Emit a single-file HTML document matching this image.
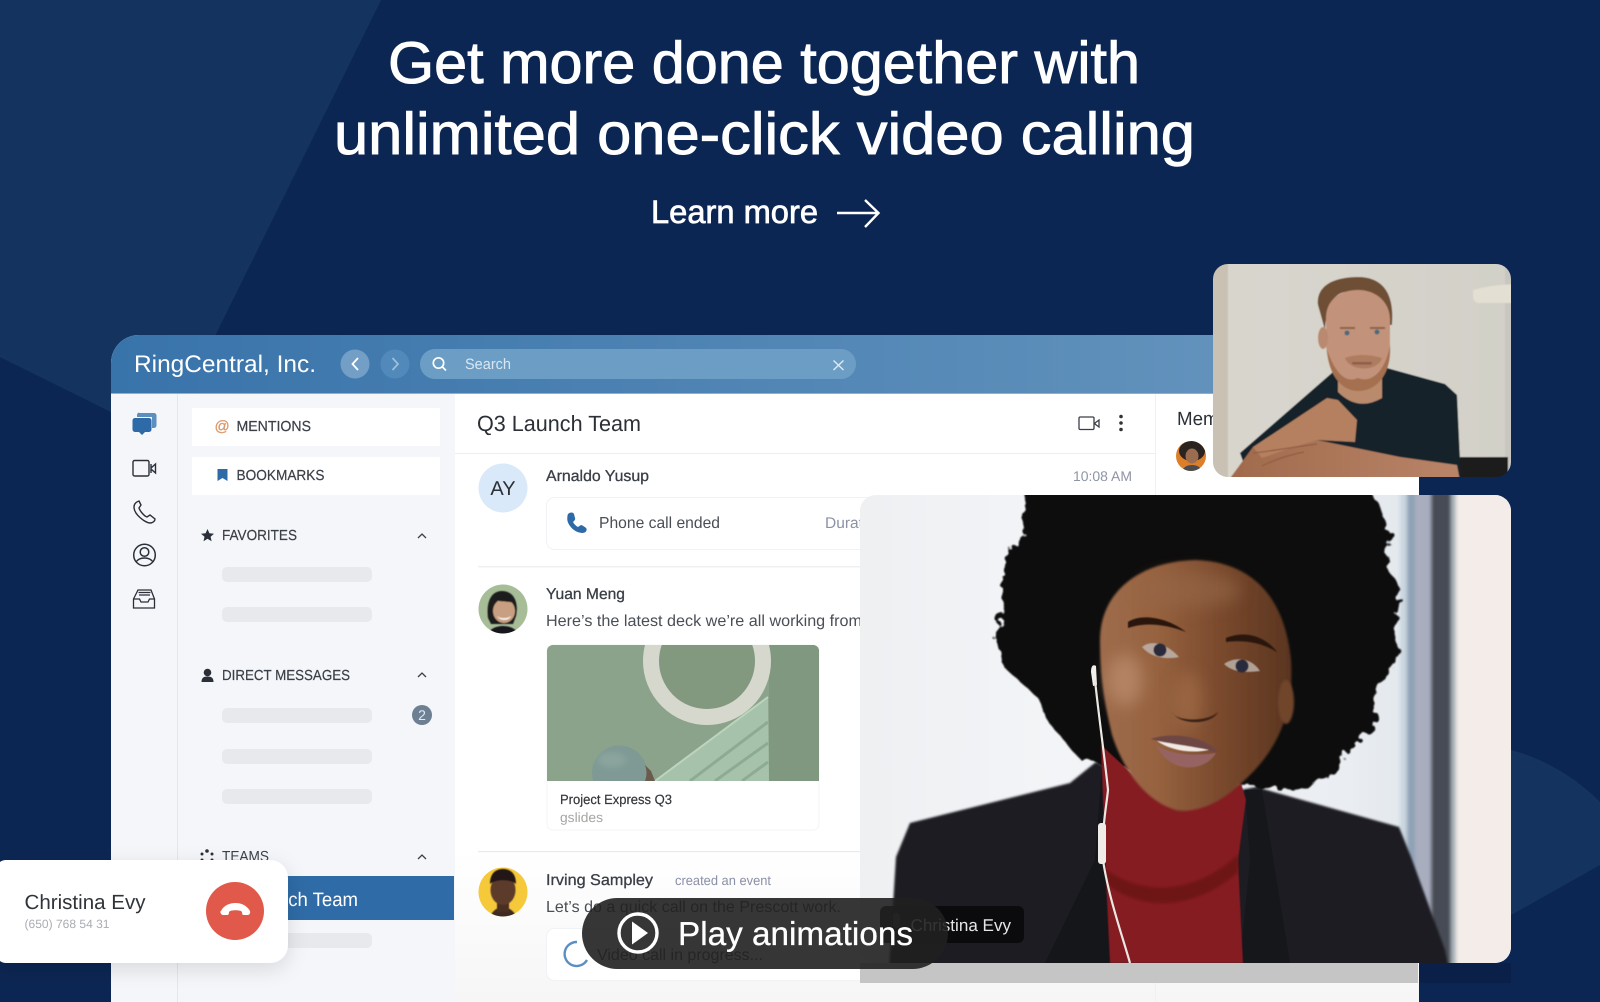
<!DOCTYPE html>
<html lang="en"><head><meta charset="utf-8"><title>RingCentral</title>
<style>
html,body{margin:0;padding:0;background:#0c2653;width:1600px;height:1002px;overflow:hidden}
svg{display:block}
text{font-family:"Liberation Sans",sans-serif}
.m{stroke-width:.3px;paint-order:stroke}
</style></head><body>
<svg width="1600" height="1002" viewBox="0 0 1600 1002" xmlns="http://www.w3.org/2000/svg" text-rendering="geometricPrecision">
<defs>
<linearGradient id="hd" x1="0" x2="1" y1="0" y2="0"><stop offset="0" stop-color="#3873aa"/><stop offset="1" stop-color="#6292bc"/></linearGradient>
<linearGradient id="bot" x1="0" x2="0" y1="0" y2="1"><stop offset="0" stop-color="#fff"/><stop offset="1" stop-color="#f6f6f6"/></linearGradient>
<linearGradient id="wall" x1="0" x2="1" y1="0" y2="0"><stop offset="0" stop-color="#d9d6ce"/><stop offset="1" stop-color="#d2d0c8"/></linearGradient>
<linearGradient id="wbg" x1="0" x2="1" y1="0" y2="0"><stop offset="0" stop-color="#eef0f2"/><stop offset=".3" stop-color="#f3f4f7"/><stop offset=".75" stop-color="#eaedf1"/><stop offset="1" stop-color="#d5dfe6"/></linearGradient>
<linearGradient id="skin" x1="0" x2="1" y1="0" y2="0"><stop offset="0" stop-color="#9e6c4c"/><stop offset=".3" stop-color="#96623f"/><stop offset=".65" stop-color="#78482c"/><stop offset="1" stop-color="#5a3520"/></linearGradient>
<linearGradient id="arm" x1="0" x2="1" y1="0" y2="0"><stop offset="0" stop-color="#a06a4c"/><stop offset="1" stop-color="#b98468"/></linearGradient>
<filter id="b05" x="-20%" y="-20%" width="140%" height="140%"><feGaussianBlur stdDeviation=".6"/></filter>
<filter id="b1" x="-20%" y="-20%" width="140%" height="140%"><feGaussianBlur stdDeviation="1"/></filter>
<filter id="b2" x="-5%" y="-5%" width="110%" height="110%"><feGaussianBlur stdDeviation="1.800"/></filter>
<filter id="b3" x="-30%" y="-30%" width="160%" height="160%"><feGaussianBlur stdDeviation="3"/></filter>
<filter id="b8" x="-50%" y="-50%" width="200%" height="200%"><feGaussianBlur stdDeviation="8"/></filter>
<filter id="hair" x="-10%" y="-10%" width="120%" height="120%"><feTurbulence type="fractalNoise" baseFrequency=".09" numOctaves="2" seed="4"/><feDisplacementMap in="SourceGraphic" scale="16"/><feGaussianBlur stdDeviation=".8"/></filter>
<filter id="sh" x="-20%" y="-30%" width="140%" height="170%"><feDropShadow dx="0" dy="6" stdDeviation="10" flood-color="#000" flood-opacity=".12"/></filter>
<clipPath id="cA"><path d="M111 1002V363a28 28 0 0 1 28-28H1419V1002z"/></clipPath>
<clipPath id="cP"><rect x="1213" y="264" width="298" height="213" rx="15"/></clipPath>
<clipPath id="cW"><rect x="860" y="495" width="651" height="468" rx="16"/></clipPath>
<clipPath id="cD"><path d="M547 781V651a6 6 0 0 1 6-6H813a6 6 0 0 1 6 6V781z"/></clipPath>
<clipPath id="c1"><circle cx="503" cy="609" r="24.5"/></clipPath>
<clipPath id="c2"><circle cx="503" cy="892" r="24.5"/></clipPath>
<clipPath id="c3"><circle cx="1191" cy="456" r="15"/></clipPath>
</defs>

<!-- background -->
<rect width="1600" height="1002" fill="#0c2653"/>
<path d="M0 0H381L215 336 111 412 0 357z" fill="#14345f"/>
<path d="M1511 750C1548 760 1578 780 1600 802V865L1511 915z" fill="#14345f"/>

<!-- headline -->
<g fill="#fff" stroke="#fff" class="m" style="stroke-width:.9px">
<text x="388" y="83" font-size="59" textLength="752" lengthAdjust="spacingAndGlyphs">Get more done together with</text>
<text x="334" y="154" font-size="59" textLength="861" lengthAdjust="spacingAndGlyphs">unlimited one-click video calling</text>
<text x="651" y="223" font-size="32.500" textLength="167" lengthAdjust="spacingAndGlyphs" style="stroke-width:.7px">Learn more</text>
</g>
<path d="M837 213H878M865 200L878.500 213 865 227" fill="none" stroke="#fff" stroke-width="2.400"/>

<!-- app -->
<g clip-path="url(#cA)">
<rect x="111" y="335" width="1308" height="667" fill="#fff"/>
<rect x="455" y="850" width="964" height="152" fill="url(#bot)"/>
<rect x="111" y="335" width="1110" height="58" fill="url(#hd)"/>
<rect x="111" y="393" width="1308" height="1" fill="#8cb0d0"/>
<rect x="111" y="394" width="344" height="608" fill="#f4f6fa"/>
<rect x="177" y="394" width="1" height="608" fill="#e3e6ea"/>
<rect x="1155" y="394" width="1" height="608" fill="#f0f1f3"/>
<rect x="455" y="453" width="700" height="1" fill="#eceef0"/>
</g>

<text x="134" y="372" font-size="24" fill="#fff" textLength="182" lengthAdjust="spacingAndGlyphs">RingCentral, Inc.</text>
<circle cx="355" cy="364" r="14.500" fill="#739fc6"/>
<path d="M358 358L352.500 364 358 370" fill="none" stroke="#fff" stroke-width="1.800"/>
<circle cx="395" cy="364" r="14.500" fill="#5189ba"/>
<path d="M392.500 358L398 364 392.500 370" fill="none" stroke="#9dbfdb" stroke-width="1.800"/>
<rect x="420" y="349" width="436" height="30" rx="15" fill="#6c9ec5"/>
<circle cx="438.500" cy="363" r="5.200" fill="none" stroke="#fff" stroke-width="1.700"/>
<path d="M442.500 367L446 370.500" stroke="#fff" stroke-width="1.700"/>
<text x="465" y="369" font-size="15" fill="#d9e6f1" textLength="46" lengthAdjust="spacingAndGlyphs">Search</text>
<path d="M833.500 360.500L843.500 370M843.500 360.500L833.500 370" stroke="#dce8f2" stroke-width="1.500"/>

<!-- rail icons -->
<path d="M139 413h15a2.500 2.500 0 0 1 2.500 2.500v10a2.500 2.500 0 0 1-2.500 2.500h-2v-11h-15v-2a2.500 2.500 0 0 1 2.500-2.500z" fill="#5a8fc0"/>
<path d="M135 418h14a2.500 2.500 0 0 1 2.500 2.500v9a2.500 2.500 0 0 1-2.500 2.500h-4l-3 3-3-3h-4a2.500 2.500 0 0 1-2.500-2.500v-9a2.500 2.500 0 0 1 2.500-2.500z" fill="#2d6aa7"/>
<rect x="133" y="460.500" width="16" height="15.500" rx="1.500" fill="none" stroke="#2b3038" stroke-width="1.400"/>
<path d="M151 468l4.500-4v9l-4.500-4zM151 464v9" fill="none" stroke="#2b3038" stroke-width="1.400"/>
<path d="M139 501c-3 1-5 3-5 6 0 8 12 16 16 16 3 0 5-2 5-4l-5-4-3 2c-3-1-7-6-8-9l2-3z" fill="none" stroke="#2b3038" stroke-width="1.400"/>
<circle cx="144.500" cy="555" r="10.800" fill="none" stroke="#2b3038" stroke-width="1.500"/>
<circle cx="144.500" cy="552" r="4.300" fill="none" stroke="#2b3038" stroke-width="1.500"/>
<path d="M136 562c2-3 5-4 8.500-4s6.500 1 8.500 4" fill="none" stroke="#2b3038" stroke-width="1.500"/>
<path d="M138 590h13l3.500 9v9h-21v-9zM133.500 599h6l1.500 3h7l1.500-3h5M139 595h11M138.500 592.500h12" fill="none" stroke="#2b3038" stroke-width="1.300"/>

<!-- sidebar -->
<rect x="192" y="408" width="248" height="38" fill="#fff"/>
<rect x="192" y="457" width="248" height="38" fill="#fff"/>
<text x="214.500" y="431" font-size="15" fill="#dc9a6c" stroke="#dc9a6c" class="m">@</text>
<text x="236.500" y="431" font-size="14.500" fill="#3a3f47" stroke="#3a3f47" stroke-width=".2" textLength="74.500" lengthAdjust="spacingAndGlyphs">MENTIONS</text>
<path d="M217.500 469h10v12l-5-3-5 3z" fill="#2d6aa7"/>
<text x="236.500" y="480" font-size="14.500" fill="#3a3f47" stroke="#3a3f47" stroke-width=".2" textLength="88" lengthAdjust="spacingAndGlyphs">BOOKMARKS</text>

<path d="M207.500 529l1.900 4.200 4.600.5-3.400 3 1 4.500-4.100-2.400-4 2.400 1-4.500-3.500-3 4.600-.5z" fill="#2b3038"/>
<text x="222" y="540" font-size="14.500" fill="#3a3f47" stroke="#3a3f47" stroke-width=".2" textLength="75" lengthAdjust="spacingAndGlyphs">FAVORITES</text>
<path d="M418 538l4-4 4 4" fill="none" stroke="#3a3f47" stroke-width="1.300"/>
<rect x="222" y="567" width="150" height="15" rx="5" fill="#e7e9ed"/>
<rect x="222" y="607" width="150" height="15" rx="5" fill="#e7e9ed"/>

<circle cx="207.500" cy="672.500" r="3.800" fill="#2b3038"/>
<path d="M201.500 682c0-4 2-5.500 6-5.500s6 1.500 6 5.500z" fill="#2b3038"/>
<text x="222" y="680" font-size="14.500" fill="#3a3f47" stroke="#3a3f47" stroke-width=".2" textLength="128" lengthAdjust="spacingAndGlyphs">DIRECT MESSAGES</text>
<path d="M418 677l4-4 4 4" fill="none" stroke="#3a3f47" stroke-width="1.300"/>
<rect x="222" y="708" width="150" height="15" rx="5" fill="#e7e9ed"/>
<rect x="222" y="749" width="150" height="15" rx="5" fill="#e7e9ed"/>
<rect x="222" y="789" width="150" height="15" rx="5" fill="#e7e9ed"/>
<circle cx="422" cy="715" r="10" fill="#6c7f93"/>
<text x="422" y="720" font-size="14" fill="#e4e9ee" text-anchor="middle">2</text>

<g fill="#2b3038"><circle cx="207" cy="851" r="1.800"/><circle cx="202" cy="854" r="1.500"/><circle cx="212" cy="854" r="1.500"/><circle cx="202" cy="860" r="1.500"/><circle cx="212" cy="860" r="1.500"/></g>
<text x="222" y="861" font-size="14.500" fill="#3a3f47" textLength="47" lengthAdjust="spacingAndGlyphs">TEAMS</text>
<path d="M418 859l4-4 4 4" fill="none" stroke="#3a3f47" stroke-width="1.300"/>
<rect x="200" y="876" width="254" height="44" fill="#2f6ba6"/>
<text x="217" y="906" font-size="19.500" fill="#fff" textLength="141" lengthAdjust="spacingAndGlyphs">Q3 Launch Team</text>
<rect x="222" y="933" width="150" height="15" rx="5" fill="#e7e9ed"/>

<!-- chat -->
<text x="477" y="431" font-size="22" fill="#2b2f36" textLength="164" lengthAdjust="spacingAndGlyphs">Q3 Launch Team</text>
<rect x="1079" y="417" width="15" height="12.500" rx="1.200" fill="none" stroke="#3a3f47" stroke-width="1.300"/>
<path d="M1095 423l4-3v7l-4-3z" fill="none" stroke="#3a3f47" stroke-width="1.300"/>
<g fill="#333"><circle cx="1121" cy="416.500" r="1.800"/><circle cx="1121" cy="423" r="1.800"/><circle cx="1121" cy="429.500" r="1.800"/></g>
<text x="1177" y="425" font-size="19" fill="#2b2f36" textLength="78" lengthAdjust="spacingAndGlyphs">Members</text>

<circle cx="503" cy="488" r="24.500" fill="#d9e9f9"/>
<text x="503" y="495" font-size="20" fill="#2b2f36" text-anchor="middle">AY</text>
<text x="546" y="481" font-size="15.500" fill="#3a3f47" stroke="#3a3f47" class="m" textLength="103" lengthAdjust="spacingAndGlyphs">Arnaldo Yusup</text>
<text x="1073" y="481" font-size="14" fill="#8e95a6" textLength="59" lengthAdjust="spacingAndGlyphs">10:08 AM</text>
<rect x="546.500" y="497.500" width="400" height="52" rx="8" fill="#fff" stroke="#f1f2f5"/>
<path d="M568 514c2-2 5-2 6 0l1 4c.5 1 0 2-1 3l-1 1c1 2 3 4 5 5l1.500-1c1-1 2-1 3-.5l3 2c1.500 1 1.500 3 0 4.500-2 1.500-5 1-8 0-5-2-9-7-10-11-.5-3 0-6 .5-7z" fill="#2d6aa7"/>
<text x="599" y="528" font-size="16" fill="#4a4f57" textLength="121" lengthAdjust="spacingAndGlyphs">Phone call ended</text>
<text x="825" y="528" font-size="15.500" fill="#8a92a3">Duration</text>
<rect x="478" y="566" width="660" height="1.500" fill="#eff0f2"/>

<circle cx="503" cy="609" r="24.500" fill="#a7bd97"/>
<g clip-path="url(#c1)" filter="url(#b05)">
<path d="M488 618c-2-16 3-27 14-27s17 10 14 25l-3 8h-22z" fill="#1c1a1a"/>
<ellipse cx="504" cy="611" rx="11" ry="12" fill="#c8a081"/>
<path d="M494 600c5 2 14 1 20 3-2-7-6-9-11-9-6 0-8 3-9 6z" fill="#1c1a1a"/>
<path d="M497 616c3 3 11 3 14 0-2 5-11 5-14 0z" fill="#fff"/>
<path d="M488 635c1-6 8-9 15-9s14 3 15 9z" fill="#16181c"/>
</g>
<text x="546" y="599" font-size="15.500" fill="#3a3f47" stroke="#3a3f47" class="m" textLength="79" lengthAdjust="spacingAndGlyphs">Yuan Meng</text>
<text x="546" y="626" font-size="16" fill="#4a4f57" textLength="316" lengthAdjust="spacingAndGlyphs">Here’s the latest deck we’re all working from</text>

<rect x="547" y="645" width="272" height="185" rx="6" fill="#fff" stroke="#f3f4f5"/>
<g clip-path="url(#cD)">
<rect x="547" y="645" width="272" height="136" fill="#8aa38a"/>
<rect x="769" y="645" width="50" height="136" fill="#7f987f"/>
<circle cx="707" cy="661" r="56" fill="#82997f" stroke="#d6d8cd" stroke-width="16"/>
<path d="M655 781L768 697 769 781z" fill="#a6c2aa"/>
<path d="M690 781L768 722M715 781L768 743M742 781L768 762" stroke="#8dab94" stroke-width="3" fill="none"/>
<path d="M655 781L768 697" stroke="#bcd4be" stroke-width="2" fill="none"/>
<circle cx="619.500" cy="773" r="27.500" fill="#7f9a95"/>
<ellipse cx="612" cy="760" rx="14" ry="7" fill="#8ba49e" filter="url(#b3)"/>
<path d="M645 781c2-6 2-10 0-16l6 6 4 10z" fill="#6b5b4c"/>
</g>
<text x="560" y="804" font-size="13.500" fill="#33363b" stroke="#33363b" stroke-width=".2" textLength="112" lengthAdjust="spacingAndGlyphs">Project Express Q3</text>
<text x="560" y="822" font-size="13.500" fill="#a3a7a3" textLength="43" lengthAdjust="spacingAndGlyphs">gslides</text>
<rect x="478" y="851" width="660" height="1.200" fill="#e9eaed"/>

<circle cx="503" cy="892" r="24.500" fill="#f5c93a"/>
<g clip-path="url(#c2)" filter="url(#b05)">
<path d="M490 918c1-6 7-11 13-11s12 5 14 11z" fill="#3e2a22"/>
<rect x="497" y="900" width="12" height="12" fill="#4a2e20"/>
<ellipse cx="503" cy="890" rx="12.500" ry="15" fill="#5b3a2a"/>
<path d="M490 884c0-10 5-15 13-15s13 5 13 15c-5-5-21-5-26 0z" fill="#201612"/>
</g>
<text x="546" y="885" font-size="15.500" fill="#3a3f47" stroke="#3a3f47" class="m" textLength="107" lengthAdjust="spacingAndGlyphs">Irving Sampley</text>
<text x="675" y="885" font-size="13.500" fill="#8a90a8" textLength="96" lengthAdjust="spacingAndGlyphs">created an event</text>
<text x="546" y="912" font-size="16" fill="#4a4f57" textLength="295" lengthAdjust="spacingAndGlyphs">Let’s do a quick call on the Prescott work.</text>
<rect x="546.500" y="928.500" width="401" height="52" rx="8" fill="#fff" stroke="#f1f2f5"/>
<path d="M577 942a12 12 0 1 0 10 18" fill="none" stroke="#5b8fc2" stroke-width="2.400"/>
<text x="597" y="960" font-size="16" fill="#4a4f57" textLength="166" lengthAdjust="spacingAndGlyphs">Video call in progress...</text>

<!-- bottom tile shadow -->
<rect x="860" y="963" width="558" height="20" fill="#c5c5c5"/>
<rect x="1419" y="963" width="92" height="20" fill="#0a2048"/>

<!-- woman tile -->
<g clip-path="url(#cW)">
<rect x="860" y="495" width="651" height="468" fill="url(#wbg)"/>
<g filter="url(#b2)">
<rect x="1400" y="485" width="7" height="490" fill="#cbd6e0"/>
<rect x="1407" y="485" width="8" height="490" fill="#8ea2b6"/>
<rect x="1415" y="485" width="16" height="490" fill="#a9aebf"/>
<rect x="1431" y="485" width="20" height="490" fill="#474b55"/>
<rect x="1451" y="485" width="6" height="490" fill="#aab3bb"/>
<rect x="1456" y="485" width="65" height="490" fill="#f3ece9"/>
</g>
<path d="M1028 480L1365 480 1390 530 1386 567 1401 590 1394 630 1399 657 1373 690 1378 723 1340 757 1336 773 1298 790 1256 787 1100 765 1079 758 1049 723 1037 697 1007 670 995 640 1003 600 1003 557 1024 533z" fill="#0e0d0e" filter="url(#hair)"/>
<path d="M889 970L896 857 910 823 1070 783 1096 762 1150 790 1240 790 1256 787 1399 827 1411 857 1445 950 1449 970z" fill="#1c1d22" filter="url(#b1)"/>
<path d="M1045 963L1095 860 1102 765 1110 760 1115 963z" fill="#14161a"/>
<path d="M1240 963L1250 860 1245 790 1262 790 1290 963z" fill="#15171b"/>
<path d="M1101 745L1150 790 1180 811 1241 783 1246 800 1238 860 1243 963 1110 963 1106 880z" fill="#841a21" filter="url(#b05)"/>
<path d="M1106 870C1150 900 1200 890 1238 855L1238 872C1200 905 1150 915 1108 885z" fill="#6e1219" filter="url(#b1)"/>
<path d="M1100 640C1100 595 1135 562 1195 560 1255 562 1285 600 1291 660 1294 710 1280 745 1250 775 1225 800 1205 811 1180 811 1150 805 1125 775 1112 735 1105 705 1100 680 1100 640z" fill="url(#skin)" filter="url(#b1)"/>
<ellipse cx="1125" cy="680" rx="18" ry="26" fill="#c69a7a" opacity=".55" filter="url(#b8)"/>
<ellipse cx="1190" cy="590" rx="50" ry="18" fill="#96674a" opacity=".6" filter="url(#b8)"/>
<ellipse cx="1188" cy="700" rx="14" ry="28" fill="#a8714c" opacity=".55" filter="url(#b8)"/>
<ellipse cx="1286" cy="702" rx="8" ry="22" fill="#70452c" filter="url(#b1)"/>
<g filter="url(#b05)">
<path d="M1128 622C1140 614 1165 616 1186 632 1165 624 1145 622 1128 628z" fill="#2a1710"/>
<path d="M1226 638C1245 630 1265 636 1277 652 1260 642 1245 640 1226 642z" fill="#2a1710"/>
<path d="M1142 647C1150 640 1165 642 1179 657 1165 660 1150 657 1142 647z" fill="#b8a79c"/>
<circle cx="1160" cy="650" r="6.500" fill="#2a2a3c"/>
<path d="M1224 664C1235 656 1252 658 1260 671 1245 673 1232 672 1224 664z" fill="#b0a096"/>
<circle cx="1242" cy="666" r="6.500" fill="#2a2a3c"/>
<path d="M1172 712C1176 722 1208 722 1218 712 1212 725 1180 726 1172 712z" fill="#3e2014"/>
<path d="M1151 739C1170 732 1205 735 1219 753 1190 745 1170 745 1151 739z" fill="#6e4644"/>
<path d="M1157 741C1180 745 1200 748 1209 750 1190 754 1170 750 1157 741z" fill="#f2e9e4"/>
<path d="M1156 745C1170 755 1195 756 1216 753 1205 772 1170 775 1156 745z" fill="#966462"/>
</g>
<path d="M1096 666c-3-2-5 0-5 6l2 14 4-1z" fill="#f2f0ee"/>
<path d="M1095 680C1098 710 1105 760 1108 790 1106 810 1102 825 1103 860 1108 895 1122 935 1130 963" fill="none" stroke="#ebe8e3" stroke-width="2.200"/>
<rect x="1098" y="823" width="8" height="41" rx="3" fill="#efece8"/>
<!-- name label -->
<rect x="880" y="906" width="144" height="37" rx="6" fill="#0a0a0c" opacity=".92"/>
<rect x="893" y="913" width="7" height="15" rx="3.500" fill="#444"/>
<text x="910.500" y="931" font-size="17" fill="#e6e6e6" textLength="100.500" lengthAdjust="spacingAndGlyphs">Christina Evy</text>
</g>

<!-- members avatar -->
<circle cx="1191" cy="456" r="15" fill="#dd7f2a"/>
<g clip-path="url(#c3)">
<ellipse cx="1192" cy="451" rx="13" ry="10" fill="#2a2320"/>
<ellipse cx="1192" cy="456" rx="6.500" ry="7.500" fill="#9a6c50"/>
<path d="M1182 472c1-5 5-7 10-7s9 2 10 7z" fill="#4a4c50"/>
</g>

<!-- person tile -->
<g clip-path="url(#cP)">
<g filter="url(#b05)">
<rect x="1205" y="256" width="314" height="230" fill="url(#wall)"/>
<rect x="1205" y="256" width="23" height="230" fill="#c9c1b4"/>
<rect x="1505" y="256" width="14" height="230" fill="#c7c6bf"/>
<path d="M1473 290Q1490 285 1515 284V303H1478Q1473 302 1473 296z" fill="#e3dfd2"/>
<rect x="1460" y="457" width="48" height="24" fill="#1d1d1c"/>
<path d="M1240 453L1333 372 1387 368 1445 384 1457 395 1461 481H1250z" fill="#14242a"/>
<path d="M1338 372V392Q1358 412 1382 398V366z" fill="#b98a6c"/>
<path d="M1228 481L1253 447 1317 440 1400 457 1457 465 1460 481z" fill="url(#arm)"/>
<path d="M1253 447L1327 398 1338 400 1357 420 1355 442 1317 440 1285 450 1262 458z" fill="#b5805f"/>
<path d="M1253 453C1280 450 1300 446 1317 444M1262 466C1278 458 1290 455 1304 452" fill="none" stroke="#8f5d44" stroke-width="1.200"/>
<path d="M1318 305C1316 285 1335 277 1358 277 1380 277 1395 290 1392 325L1386 325C1382 298 1368 288 1345 292 1332 294 1326 310 1325 330z" fill="#6e4f36"/>
<path d="M1326 318C1326 300 1340 290 1358 290 1376 290 1390 302 1390 320V350C1390 370 1378 390 1358 390 1340 390 1328 372 1326 345z" fill="#c2927a"/>
<path d="M1327 350C1335 372 1345 384 1358 378 1372 384 1386 370 1390 345 1392 372 1378 391 1358 391 1340 391 1328 372 1327 350z" fill="#a4704f"/>
<path d="M1345 358C1355 354 1370 354 1382 358 1378 372 1350 372 1345 358z" fill="#a9785a" opacity=".8"/>
<rect x="1352" y="362" width="20" height="2.500" rx="1.200" fill="#8e5b4b"/>
<ellipse cx="1323" cy="338" rx="5" ry="11" fill="#b98a6f"/>
<path d="M1340 328H1355M1370 328H1385" stroke="#8a6444" stroke-width="2"/>
<circle cx="1347" cy="333" r="2.500" fill="#4e6a7c"/><circle cx="1377" cy="332" r="2.500" fill="#4e6a7c"/>
</g>
</g>

<!-- play pill -->
<rect x="582" y="898" width="366" height="71" rx="35.500" fill="#202020" fill-opacity=".9"/>
<circle cx="638" cy="933" r="19" fill="none" stroke="#fff" stroke-width="3.400"/>
<path d="M632 921.500L648 933 632 944.500z" fill="#fff"/>
<text x="678" y="945" font-size="33" fill="#fff" stroke="#fff" class="m" textLength="235" lengthAdjust="spacingAndGlyphs">Play animations</text>

<!-- call card -->
<path d="M6 860H270a18 18 0 0 1 18 18v67a18 18 0 0 1-18 18H6a10 10 0 0 1-6-2V862a10 10 0 0 1 6-2z" fill="#fff" filter="url(#sh)"/>
<text x="24.500" y="909" font-size="20.500" fill="#2f343a" textLength="121" lengthAdjust="spacingAndGlyphs">Christina Evy</text>
<text x="24.500" y="928" font-size="12" fill="#a9adb3" textLength="85" lengthAdjust="spacingAndGlyphs">(650) 768 54 31</text>
<circle cx="235" cy="911" r="29" fill="#e0594a"/>
<path d="M221 911c3-6 9-8 14.500-8s11 2 14.500 8c.5 2-.5 4-2 4h-4c-1.500 0-2-1-2-3l-1-1c-3-1-8-1-11 0l-1 1c0 2-.5 3-2 3h-4c-1.500 0-3-2-2.500-4z" fill="#fff"/>
</svg>
</body></html>
